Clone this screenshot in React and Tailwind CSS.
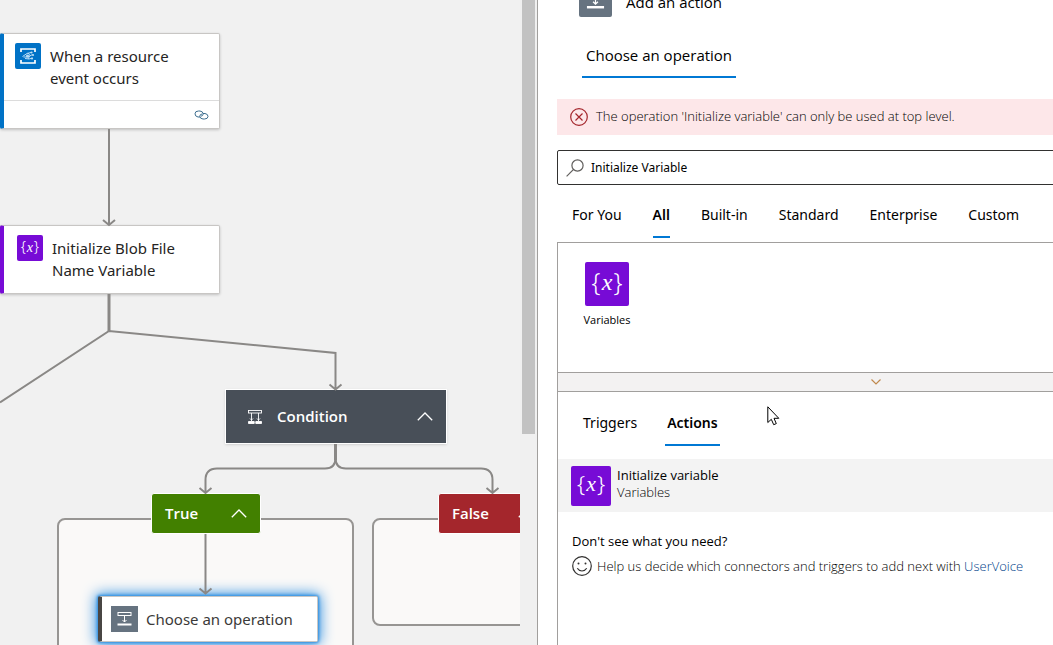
import React from "react";

function VariableTile({ className }) {
  return (
    <span className={`block shrink-0 rounded-[2px] bg-[#770bd6] ${className}`}>
      <svg viewBox="0 0 44 44" className="block h-full w-full" fill="#fff" textAnchor="middle" aria-hidden="true">
        <text x="11" y="29" fontSize="25" fontFamily="Noto Sans, sans-serif" fontWeight="300">{"{"}</text>
        <text x="22" y="28" fontSize="24" fontStyle="italic" fontFamily="Liberation Serif, serif">x</text>
        <text x="33" y="29" fontSize="25" fontFamily="Noto Sans, sans-serif" fontWeight="300">{"}"}</text>
      </svg>
    </span>
  );
}

function StepTile({ className }) {
  return (
    <span className={`block shrink-0 bg-[#667380] ${className}`}>
      <svg viewBox="0 0 27 26" className="block h-full w-full" fill="none" stroke="#fff" aria-hidden="true">
        <rect x="7" y="6.5" width="13" height="3" strokeWidth="1" />
        <path d="M13.5 9.5V16M11.5 14L13.5 16L15.5 14" strokeWidth="1" />
        <rect x="6.5" y="17.5" width="14" height="2" fill="#fff" stroke="none" />
      </svg>
    </span>
  );
}

function EventTile() {
  return (
    <span className="block size-[26px] shrink-0 rounded-[2px] bg-[#0072c6]">
      <svg viewBox="0 0 26 26" className="block h-full w-full" fill="none" stroke="#fff" aria-hidden="true">
        <path d="M6 9V6H20V9M6 17V20H20V17" strokeWidth="1.7" />
        <path d="M7.5 13.5L12 10.5L16 9.5M8.5 14H13L17.5 11.5M10 15.5L14 16L17.5 15M13 9.8L15 12.5L13 16" strokeWidth="1" stroke="#b9dcf5" />
        <g fill="#b9dcf5" stroke="none">
          <circle cx="16.5" cy="9.5" r="1.1" />
          <circle cx="18" cy="12" r="1.1" />
          <circle cx="17" cy="15.5" r="1.1" />
          <circle cx="12.5" cy="13" r="1.6" />
        </g>
      </svg>
    </span>
  );
}

function ChevronUp() {
  return (
    <svg viewBox="0 0 16 9" className="h-[9px] w-4 shrink-0" fill="none" stroke="#fff" strokeWidth="1.3" aria-hidden="true">
      <path d="M0.8 8.2L8 1L15.2 8.2" />
    </svg>
  );
}

function Connectors() {
  return (
    <svg className="absolute left-0 top-0 h-[645px] w-[520px]" viewBox="0 0 520 645" fill="none" stroke="#8a8886" strokeWidth="2" aria-hidden="true">
      <path d="M109 129V225M103 220L109 225L115 220" />
      <path d="M109 294V331" strokeWidth="3" />
      <path d="M0 402.500L109 331L335.500 353V389M329.500 384.500L335.500 389.500L341.500 384.500" />
      <path d="M335.500 444V460" strokeWidth="3" />
      <path d="M335.500 458Q335.500 468.500 325 468.500H217Q205.500 468.500 205.500 480V493M199.500 488L205.500 493L211.500 488" />
      <path d="M335.500 458Q335.500 468.500 346 468.500H481Q492.500 468.500 492.500 480V493M486.500 488L492.500 493L498.500 488" />
      <path d="M205.500 534V593M199.500 588.500L205.500 593.500L211.500 588.500" />
    </svg>
  );
}

function Canvas() {
  return (
    <section aria-label="Workflow" className="relative min-w-0 flex-1 overflow-hidden bg-[#f1f1f1]">
      <div className="absolute left-[57px] top-[518px] h-[160px] w-[297px] rounded-lg border-2 border-[#979593] bg-[#faf9f8]" />
      <div className="absolute left-[372px] top-[518px] h-[108px] w-[297px] rounded-lg border-2 border-[#979593] bg-[#faf9f8]" />

      <article className="absolute left-0 top-[33px] w-[220px] rounded-[2px] border border-l-4 border-[#c8c6c4] border-l-[#0072c6] bg-white shadow-[0_1px_3px_rgba(0,0,0,0.2)]">
        <div className="flex h-[66px] gap-[9px] pl-[11px] pt-[9px]">
          <EventTile />
          <p className="w-[140px] pt-[2px] text-[15px] leading-[22px]">When a resource event occurs</p>
        </div>
        <div className="flex h-[28px] items-center justify-end border-t border-[#dcdcdc] pr-[10px]">
          <svg viewBox="0 0 15 10" className="h-[10px] w-[15px]" fill="none" stroke="#3c6e8f" strokeWidth="1" aria-hidden="true">
            <path d="M6 7H4Q1 6.500 1 3.800Q1 1 4.500 1H6Q9 1.300 9.200 4Q9 6 7 6.200" />
            <path d="M9 3.500H11Q14 4 14 6.500Q13.800 9 10.500 9H9Q6 8.800 5.800 6.200Q5.900 4.200 8 4" />
          </svg>
        </div>
      </article>

      <article className="absolute left-0 top-[225px] flex h-[69px] w-[220px] gap-[9px] rounded-[2px] border border-l-4 border-[#c8c6c4] border-l-[#770bd6] bg-white pl-[13px] pt-[9px] shadow-[0_1px_3px_rgba(0,0,0,0.2)]">
        <VariableTile className="size-[26px]" />
        <p className="w-[140px] pt-[2px] text-[15px] leading-[22px]">Initialize Blob File Name Variable</p>
      </article>

      <button type="button" className="absolute left-[225px] top-[389px] flex h-[55px] w-[222px] items-center border border-white bg-[#484f58] pl-[21px] pr-[13px] text-left text-white shadow-sm">
        <svg viewBox="0 0 16 16" className="size-4 shrink-0" fill="none" stroke="#fff" strokeWidth="0.9" aria-hidden="true">
          <rect x="1.500" y="1.500" width="13" height="2.500" />
          <path d="M4.500 4V12M11.500 4V12M3 9.500L4.500 11L6 9.500M10 9.500L11.500 11L13 9.500" />
          <path d="M1.500 12.500H7.200V14.500H1.500ZM8.800 12.500H14.500V14.500H8.800Z" fill="#fff" />
        </svg>
        <span className="flex-1 pl-[14px] text-[15px] font-semibold font-['Open_Sans','Noto_Sans',sans-serif]">Condition</span>
        <ChevronUp />
      </button>

      <button type="button" className="absolute left-[151px] top-[493px] flex h-[41px] w-[110px] items-center justify-between rounded-[3px] border border-white bg-[#428000] px-[13px] text-[15px] font-semibold text-white font-['Open_Sans','Noto_Sans',sans-serif]">
        True
        <ChevronUp />
      </button>
      <button type="button" className="absolute left-[438px] top-[493px] flex h-[41px] w-[110px] items-center justify-between rounded-[3px] border border-white bg-[#a4262c] px-[13px] text-[15px] font-semibold text-white font-['Open_Sans','Noto_Sans',sans-serif]">
        False
        <ChevronUp />
      </button>

      <article className="absolute left-[98px] top-[596px] flex h-[46px] w-[220px] items-center gap-2 rounded-[2px] border border-l-4 border-[#c8c6c4] border-l-[#484644] bg-white pl-[9px] shadow-[0_0_3px_1px_#2a8de0,0_0_14px_2px_#2a8de0]">
        <StepTile className="h-[26px] w-[27px]" />
        <p className="text-[15px] text-[#3b3a39]">Choose an operation</p>
      </article>

      <Connectors />
    </section>
  );
}

function Tab({ children, active, className }) {
  return (
    <button
      type="button"
      role="tab"
      aria-selected={!!active}
      className={`border-b-2 font-['Noto_Sans','Open_Sans',sans-serif] text-[14px] ${active ? "border-[#0078d4] font-semibold" : "border-transparent"} ${className}`}
    >
      {children}
    </button>
  );
}

function Panel() {
  return (
    <aside aria-label="Add an action" className="w-[49%] shrink-0 overflow-hidden border-l border-[#a19f9d] bg-white pl-[19px] font-['Open_Sans','Noto_Sans',sans-serif] text-black">
      <div className="min-w-[638px]">
        <header className="-mt-4 flex items-center gap-[14px] pl-[22px]">
          <StepTile className="h-[33px] w-[33px] rounded-[2px]" />
          <h1 className="pt-1 text-[15px]">Add an action</h1>
        </header>
        <div role="tablist" className="flex pl-[25px] pt-[17px]">
          <button type="button" role="tab" aria-selected="true" className="h-[44px] border-b-2 border-[#0078d4] px-1 text-[15px]">
            Choose an operation
          </button>
        </div>

        <div role="alert" className="mt-[21px] flex h-9 items-center gap-2 bg-[#fde7e9] pl-[13px] text-[13px] font-light text-black">
          <svg viewBox="0 0 18 18" className="size-[18px] shrink-0" fill="none" stroke="#a4262c" strokeWidth="1.2" aria-hidden="true">
            <circle cx="9" cy="9" r="8.300" />
            <path d="M5.500 5.500L12.500 12.500M12.500 5.500L5.500 12.500" />
          </svg>
          The operation 'Initialize variable' can only be used at top level.
        </div>

        <label className="mt-[15px] flex h-[35px] items-center gap-[7px] rounded-[2px] border border-[#323130] pl-2">
          <svg viewBox="0 0 18 18" className="size-[18px] shrink-0" fill="none" stroke="#605e5c" strokeWidth="1.2" aria-hidden="true">
            <circle cx="11.500" cy="6.500" r="5.600" />
            <path d="M7.300 10.700L0.600 17.400" />
          </svg>
          <input type="text" aria-label="Search connectors and actions" defaultValue="Initialize Variable" className="h-full flex-1 font-['Noto_Sans','Open_Sans',sans-serif] text-[12px] outline-none" />
        </label>

        <div role="tablist" className="flex gap-[31px] pl-[15px] pt-2">
          <Tab className="h-[45px]">For You</Tab>
          <Tab active className="h-[45px]">All</Tab>
          <Tab className="h-[45px]">Built-in</Tab>
          <Tab className="h-[45px]">Standard</Tab>
          <Tab className="h-[45px]">Enterprise</Tab>
          <Tab className="h-[45px]">Custom</Tab>
        </div>

        <div className="mt-1 h-[420px] border border-[#a19f9d]">
          <div className="h-[129px] pl-[16px] pt-[19px]">
            <button type="button" className="flex w-[66px] flex-col items-center gap-[5px] text-[11px] leading-[18px]">
              <VariableTile className="size-[44px]" />
              Variables
            </button>
          </div>
          <button type="button" aria-label="Expand connectors" className="flex h-5 w-full items-center justify-center border-y border-[#a19f9d] bg-[#f3f2f2]">
            <svg viewBox="0 0 10 6" className="h-[6px] w-[10px]" fill="none" stroke="#c08a4e" strokeWidth="1.200" aria-hidden="true">
              <path d="M0.500 0.500L5 5L9.500 0.500" />
            </svg>
          </button>

          <div role="tablist" className="flex gap-[26px] pl-[23px] pt-2">
            <Tab className="h-[46px] px-[2px]">Triggers</Tab>
            <Tab active className="h-[46px] px-[2px]">Actions</Tab>
          </div>

          <button type="button" className="mt-[13px] flex h-[53px] w-full items-center gap-[6px] bg-[#f3f3f3] pl-[13px] text-left text-[13px] leading-[17px]">
            <VariableTile className="size-10" />
            <span className="pb-1">
              <span className="block font-medium">Initialize variable</span>
              <span className="block font-light">Variables</span>
            </span>
          </button>

          <div className="pl-[14px] pt-[19px] text-[13px] leading-[20px] text-black">
            <p className="font-medium">Don't see what you need?</p>
            <div className="flex items-center gap-[5px] pt-[5px]">
              <svg viewBox="0 0 20 20" className="size-5 shrink-0" fill="none" stroke="#323130" strokeWidth="1.200" aria-hidden="true">
                <circle cx="10" cy="10" r="9.300" />
                <path d="M5.300 12.300Q7 15 10 15T14.700 12.300" />
                <circle cx="6.500" cy="7.500" r="1" fill="#323130" stroke="none" />
                <circle cx="13.500" cy="7.500" r="1" fill="#323130" stroke="none" />
              </svg>
              <p className="font-light">
                Help us decide which connectors and triggers to add next with{" "}
                <a href="#uservoice" className="text-[#003f8a]">UserVoice</a>
              </p>
            </div>
          </div>
        </div>
      </div>
    </aside>
  );
}

export default function App() {
  return (
    <main className="relative flex h-screen overflow-hidden bg-white font-['Noto_Sans','Open_Sans',sans-serif] text-[#252423]">
      <Canvas />
      <div className="w-[17px] shrink-0 bg-[#f0f0f0] px-[2px]">
        <div className="h-[434px] w-[13px] bg-[#c2c2c2]" />
      </div>
      <Panel />
      <svg viewBox="0 0 13 20" className="pointer-events-none absolute left-[767px] top-[406px] h-5 w-[13px]" fill="#fff" stroke="#000" strokeWidth="1" aria-hidden="true">
        <path d="M0.800 0.800V16.500L4.300 13.300L6.700 18.700L9.300 17.600L7 12.300H11.800Z" />
      </svg>
    </main>
  );
}
